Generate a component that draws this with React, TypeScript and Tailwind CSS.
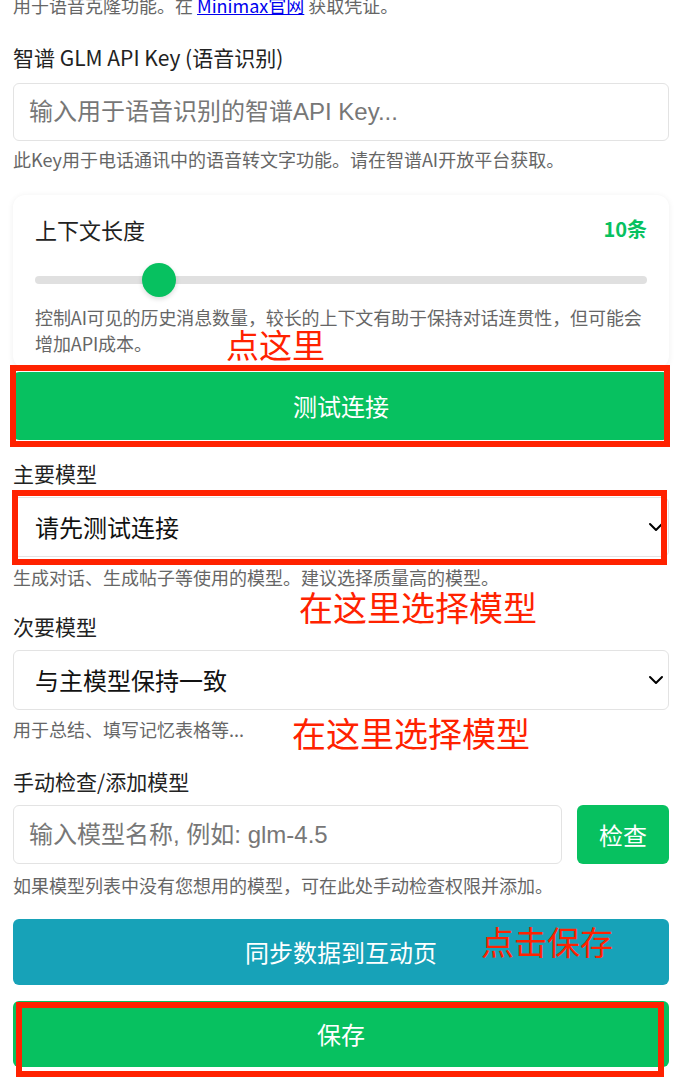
import React from 'react';
import { ChevronDown } from 'lucide-react';

const cjk = { fontFamily: '"Noto Sans CJK SC", "Liberation Sans", sans-serif' };
const latinFirst = { fontFamily: '"Liberation Sans", "Noto Sans CJK SC", sans-serif' };

function Select({ value }: { value: string }) {
    return (
        <div className="relative">
            <select
                defaultValue={value}
                style={cjk}
                className="block h-[60px] w-full appearance-none rounded-[6px] border border-[#e3e3e3] bg-white pl-[21px] text-[24px] text-[#111] outline-none"
            >
                <option>{value}</option>
            </select>
            <ChevronDown size={24} strokeWidth={2} className="pointer-events-none absolute right-[1px] top-[18px] text-black" />
        </div>
    );
}

function Label({ children }: { children: React.ReactNode }) {
    return <div className="text-[21px] leading-[30px] text-[#222]">{children}</div>;
}

function Help({ children, className = '' }: { children: React.ReactNode; className?: string }) {
    return <p className={`text-[18px] leading-[26px] text-[#666] ${className}`}>{children}</p>;
}

export default function App() {
    return (
        <div className="relative overflow-hidden bg-white pb-[20px] pl-[13px] pr-[8px]" style={cjk}>
            <Help className="mt-[-8px]">
                用于语音克隆功能。在 <a className="text-[#0000ee] underline">Minimax官网</a> 获取凭证。
            </Help>

            <div className="mt-[24px] flex flex-col gap-[11px]">
                <Label>智谱 GLM API Key (语音识别)</Label>
                <input
                    placeholder="输入用于语音识别的智谱API Key..."
                    style={latinFirst}
                    className="block h-[58px] w-full rounded-[6px] border border-[#e3e3e3] px-[15px] text-[24px] outline-none placeholder:text-[#777]"
                />
            </div>
            <Help className="mt-[5px]">此Key用于电话通讯中的语音转文字功能。请在智谱AI开放平台获取。</Help>

            <div className="mt-[23px] rounded-[12px] bg-white px-[22px] pb-[12px] pt-[19px] shadow-[0_1px_6px_rgba(0,0,0,0.07)]">
                <div className="flex items-center justify-between">
                    <span className="text-[22px] leading-[30px] text-[#222]">上下文长度</span>
                    <span className="text-[20px] font-bold leading-[30px] text-[#07c160]">10条</span>
                </div>
                <div className="relative mt-[18px] flex h-[36px] items-center">
                    <div className="h-[8px] w-full rounded-full bg-[#e0e0e0]" />
                    <div className="absolute left-[107px] top-[1px] h-[34px] w-[34px] rounded-full bg-[#07c160] shadow-[0_2px_5px_rgba(0,0,0,0.15)]" />
                </div>
                <Help className="mt-[6px] tracking-[-0.1px]">控制AI可见的历史消息数量，较长的上下文有助于保持对话连贯性，但可能会增加API成本。</Help>
            </div>

            <button className="mt-[4px] flex h-[68px] w-full items-center justify-center rounded-[6px] bg-[#07c160] text-[24px] text-white">
                测试连接
            </button>

            <div className="mt-[18px] flex flex-col gap-[9px]">
                <Label>主要模型</Label>
                <Select value="请先测试连接" />
            </div>
            <Help className="mt-[7px]">生成对话、生成帖子等使用的模型。建议选择质量高的模型。</Help>

            <div className="mt-[21px] flex flex-col gap-[9px]">
                <Label>次要模型</Label>
                <Select value="与主模型保持一致" />
            </div>
            <Help className="mt-[6px]">用于总结、填写记忆表格等...</Help>

            <div className="mt-[24px] flex flex-col gap-[9px]">
                <Label>手动检查/添加模型</Label>
                <div className="flex gap-[15px]">
                    <input
                        placeholder="输入模型名称, 例如: glm-4.5"
                        style={latinFirst}
                        className="block h-[59px] min-w-0 flex-1 rounded-[6px] border border-[#e3e3e3] px-[15px] text-[24px] outline-none placeholder:text-[#777]"
                    />
                    <button className="h-[59px] w-[92px] rounded-[6px] bg-[#07c160] text-[24px] text-white">检查</button>
                </div>
            </div>
            <Help className="mt-[8px]">如果模型列表中没有您想用的模型，可在此处手动检查权限并添加。</Help>

            <div className="mt-[21px] flex flex-col gap-[16px]">
                <button className="flex h-[66px] w-full items-center justify-center rounded-[6px] bg-[#17a2b8] text-[24px] text-white">
                    同步数据到互动页
                </button>
                <button className="flex h-[66px] w-full items-center justify-center rounded-[6px] bg-[#07c160] text-[24px] text-white">
                    保存
                </button>
            </div>

            {/* annotations drawn over the screenshot */}
            <div className="pointer-events-none absolute left-[10px] top-[365px] h-[82px] w-[660px] border-[6px] border-[#ff2200]" />
            <div className="pointer-events-none absolute left-[12px] top-[490px] h-[75px] w-[655px] border-[6px] border-[#ff2200]" />
            <div className="pointer-events-none absolute left-[16px] top-[1002px] h-[75px] w-[648px] border-[6px] border-[#ff2200]" />

            <span className="absolute left-[226px] top-[322px] text-[33px] leading-[44px] text-[#ff2200]">点这里</span>
            <span className="absolute left-[299px] top-[585px] text-[34px] leading-[44px] text-[#ff2200]">在这里选择模型</span>
            <span className="absolute left-[292px] top-[711px] text-[34px] leading-[44px] text-[#ff2200]">在这里选择模型</span>
            <span className="absolute left-[481px] top-[919px] text-[33px] leading-[44px] text-[#ff2200]">点击保存</span>
        </div>
    );
}
